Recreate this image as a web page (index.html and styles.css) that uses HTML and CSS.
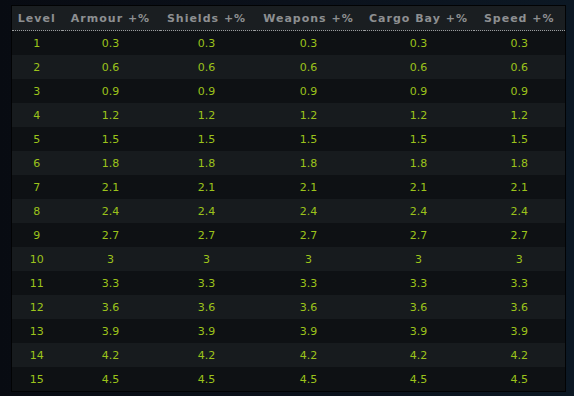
FILE: index.html
```html
<!DOCTYPE html>
<html>
<head>
<meta charset="utf-8">
<link rel="stylesheet" href="styles.css">
</head>
<body>
<div class="wrap">
<table class="bonus">
<colgroup>
<col class="c1"><col class="c2"><col class="c3"><col class="c4"><col class="c5"><col class="c6">
</colgroup>
<thead>
<tr><th>Level</th><th>Armour +%</th><th>Shields +%</th><th>Weapons +%</th><th>Cargo Bay +%</th><th>Speed +%</th></tr>
</thead>
<tbody>
<tr><td>1</td><td>0.3</td><td>0.3</td><td>0.3</td><td>0.3</td><td>0.3</td></tr>
<tr><td>2</td><td>0.6</td><td>0.6</td><td>0.6</td><td>0.6</td><td>0.6</td></tr>
<tr><td>3</td><td>0.9</td><td>0.9</td><td>0.9</td><td>0.9</td><td>0.9</td></tr>
<tr><td>4</td><td>1.2</td><td>1.2</td><td>1.2</td><td>1.2</td><td>1.2</td></tr>
<tr><td>5</td><td>1.5</td><td>1.5</td><td>1.5</td><td>1.5</td><td>1.5</td></tr>
<tr><td>6</td><td>1.8</td><td>1.8</td><td>1.8</td><td>1.8</td><td>1.8</td></tr>
<tr><td>7</td><td>2.1</td><td>2.1</td><td>2.1</td><td>2.1</td><td>2.1</td></tr>
<tr><td>8</td><td>2.4</td><td>2.4</td><td>2.4</td><td>2.4</td><td>2.4</td></tr>
<tr><td>9</td><td>2.7</td><td>2.7</td><td>2.7</td><td>2.7</td><td>2.7</td></tr>
<tr><td>10</td><td>3</td><td>3</td><td>3</td><td>3</td><td>3</td></tr>
<tr><td>11</td><td>3.3</td><td>3.3</td><td>3.3</td><td>3.3</td><td>3.3</td></tr>
<tr><td>12</td><td>3.6</td><td>3.6</td><td>3.6</td><td>3.6</td><td>3.6</td></tr>
<tr><td>13</td><td>3.9</td><td>3.9</td><td>3.9</td><td>3.9</td><td>3.9</td></tr>
<tr><td>14</td><td>4.2</td><td>4.2</td><td>4.2</td><td>4.2</td><td>4.2</td></tr>
<tr><td>15</td><td>4.5</td><td>4.5</td><td>4.5</td><td>4.5</td><td>4.5</td></tr>
</tbody>
</table>
</div>
</body>
</html>
```
FILE: styles.css
```css
html, body {
  margin: 0;
  height: 100%;
}
body {
  background: linear-gradient(90deg, #080b12 0%, #0b111b 50%, #0c1824 100%);
  font-family: "DejaVu Sans", sans-serif;
}
.wrap {
  padding: 5px 9px 6px 11px;
}
.bonus {
  width: 554px;
  border-collapse: collapse;
  table-layout: fixed;
  border: 1px solid #020304;
  box-sizing: border-box;
}
.c1 { width: 50px; }
.c2 { width: 98px; }
.c3 { width: 94px; }
.c4 { width: 110px; }
.c5 { width: 110px; }
.c6 { width: 92px; }
.bonus th {
  height: 24px;
  padding: 0;
  background: #1a1e21;
  color: #8d8f91;
  font-size: 11px;
  font-weight: bold;
  letter-spacing: 1px;
  text-align: center;
  border-bottom: 1px dotted #9a9c9e;
  white-space: nowrap;
}
.bonus td {
  height: 24px;
  padding: 0;
  color: #9cc31b;
  font-size: 11px;
  text-align: center;
}
.bonus tbody tr:nth-child(odd) td { background: #0e1114; }
.bonus tbody tr:nth-child(even) td { background: #171b1e; }
```
